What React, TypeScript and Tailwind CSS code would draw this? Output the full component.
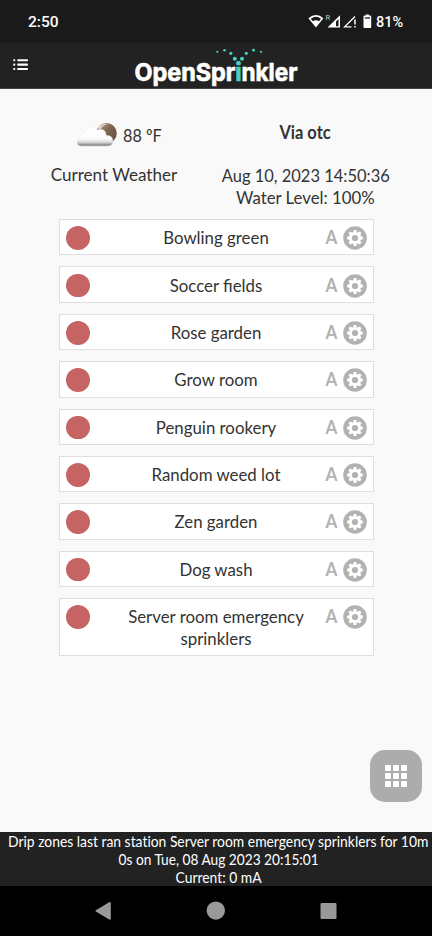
const stations = [
  { lines: ['Bowling green'] },
  { lines: ['Soccer fields'] },
  { lines: ['Rose garden'] },
  { lines: ['Grow room'] },
  { lines: ['Penguin rookery'] },
  { lines: ['Random weed lot'] },
  { lines: ['Zen garden'] },
  { lines: ['Dog wash'] },
  { lines: ['Server room emergency', 'sprinklers'] },
];

const drops = [
  [217.3, 51.8, 1.1],
  [224.5, 50.2, 1.3],
  [230.8, 53.3, 1.6],
  [234.8, 58.7, 2],
  [242, 58.7, 2],
  [246.3, 53.3, 1.6],
  [253.5, 50.2, 1.4],
  [261, 51.8, 1.1],
  [238.5, 63.4, 1.9],
];

function StatusIcons() {
  return (
    <svg width="64" height="16" viewBox="308 14 64 16" fill="white">
      <path d="M308.4 18.3 Q316 11.8 323.4 18.3 L315.9 27.6Z" />
      <path d="M310.8 18.8 Q316 14.9 321 18.8 L319 21.2 Q316 19.2 312.8 21.2Z" fill="#1a1a1a" />
      <text x="325.6" y="20.3" fontSize="7.5" className="font-['Roboto',sans-serif]" fill="#ccc">R</text>
      <path d="M327.5 27.6 L340 15.2 V27.6Z M336 21.5 V26.2 H338.5 V19Z" fillRule="evenodd" />
      <path d="M351.5 26.9 H344.6 L355 16.5" stroke="white" strokeWidth="1.3" fill="none" />
      <path d="M354.2 19.6h1.5v5h-1.5zM354.2 26h1.5v1.6h-1.5z" />
      <path d="M364.4 15.6h1.5v-1h3v1h1.5q.8 0 .8.8v10.6q0 .9-.8.9h-6q-.9 0-.9-.9V16.4q0-.8.9-.8z" />
      <path d="M364.8 17.3h5.2v1.3h-5.2z" fill="#1a1a1a" />
    </svg>
  );
}

function Logo() {
  return (
    <svg width="168" height="41" viewBox="133 47 168 41" className="font-['Inter',sans-serif]">
      <g fontSize="24.6" fontWeight="700" fill="white" stroke="white" strokeWidth="0.7">
        <text x="134.4" y="80.6" textLength="101" lengthAdjust="spacingAndGlyphs">OpenSpr</text>
        <text x="235.2" y="80.6" fill="#4bcfc0" stroke="#4bcfc0" textLength="6.4" lengthAdjust="spacingAndGlyphs">i</text>
        <text x="241.4" y="80.6" textLength="56" lengthAdjust="spacingAndGlyphs">nkler</text>
      </g>
      {drops.map(([x, y, r]) => (
        <circle key={x} cx={x} cy={y} r={r} fill="#4bcfc0" />
      ))}
    </svg>
  );
}

function WeatherIcon() {
  return (
    <svg width="42" height="26" viewBox="76 122 42 26">
      <defs>
        <linearGradient id="sun" x1="0" y1="0" x2="1" y2="1">
          <stop offset="0" stopColor="#c9ad99" />
          <stop offset="0.45" stopColor="#80664f" />
          <stop offset="1" stopColor="#5c4737" />
        </linearGradient>
        <linearGradient id="cloud" x1="0" y1="0" x2="0" y2="1">
          <stop offset="0" stopColor="#ffffff" />
          <stop offset="0.62" stopColor="#fbfbfb" />
          <stop offset="0.8" stopColor="#d4d4d4" />
          <stop offset="0.93" stopColor="#8a8a8a" />
          <stop offset="1" stopColor="#b8b8b8" />
        </linearGradient>
      </defs>
      <circle cx="106.5" cy="133.3" r="10.3" fill="url(#sun)" />
      <path d="M98 127.5 Q102 123.5 107.5 124 Q102 125.5 99.5 130Z" fill="#ead8cc" />
      <path
        d="M81.5 146.3 C76 146 75.8 140.5 79.8 137.5 C80.2 133.2 83.2 132.5 85.2 132 C86.5 126.5 93.5 125 97.5 130 C102.5 127.5 106.6 131.5 106.2 135.5 C111 134.8 113.8 138.6 112.6 141.5 C113 145.5 109.5 146.3 107 146.3Z"
        fill="url(#cloud)"
        stroke="#e4e4e4"
        strokeWidth="0.3"
      />
    </svg>
  );
}

function GearIcon() {
  return (
    <svg width="24" height="24" viewBox="-12 -12 24 24" className="shrink-0">
      <circle r="11.8" fill="#b2b2b2" />
      <g fill="white">
        <circle r="6" />
        {[0, 45, 90, 135].map((angle) => (
          <path key={angle} d="M-1.9 -5 L-1.3 -7.9 H1.3 L1.9 -5 V5 L1.3 7.9 H-1.3 L-1.9 5Z" transform={`rotate(${angle})`} />
        ))}
      </g>
      <circle r="3.1" fill="#b2b2b2" />
    </svg>
  );
}

function Station({ lines }: { lines: string[] }) {
  return (
    <div className="flex items-start border border-[#dfdfdf] bg-white px-[6px] py-[6.2px] leading-[22px]">
      <span className="-mb-1 size-[23.6px] shrink-0 rounded-full bg-[#c66363]" />
      <span className="ml-[26.4px] w-[200px] shrink-0 scale-x-[0.935] text-center whitespace-nowrap">
        {lines.map((line) => <span key={line} className="block">{line}</span>)}
      </span>
      <span className="-mb-1 ml-auto flex shrink-0 items-start gap-[5.5px]">
        <span className="scale-x-[0.92] text-[18.5px] leading-[23px] font-bold text-[#b2b2b2]">A</span>
        <GearIcon />
      </span>
    </div>
  );
}

export default function App() {
  return (
    <div className="flex h-[936px] w-[432px] flex-col overflow-hidden bg-[#f9f9f9] font-['Lato',sans-serif] text-[18px] text-[#333]">
      <div className="flex h-[43px] shrink-0 items-center bg-[#1a1a1a] pl-[28px] text-white">
        <span className="w-[280px] pt-[2px] font-['Roboto',sans-serif] text-[15.5px] font-medium">2:50</span>
        <StatusIcons />
        <span className="ml-[4px] pt-[2px] font-['Roboto',sans-serif] text-[14.5px] font-medium">81%</span>
      </div>
      <header className="flex h-[46px] shrink-0 items-start border-b border-[#444] bg-[#222]">
        <svg width="16" height="12" viewBox="0 0 16 12" fill="white" className="mt-[15.5px] ml-[12.5px]">
          {[0.2, 4.6, 9].map((y) => (
            <g key={y}>
              <rect x="0.2" y={y} width="2.1" height="2.1" rx="0.8" />
              <rect x="4.2" y={y} width="10.8" height="2.1" rx="0.8" />
            </g>
          ))}
        </svg>
        <div className="mt-[4px] ml-[104.5px]"><Logo /></div>
      </header>
      <main className="flex-1">
        <div className="flex h-[130px] leading-[22px]">
          <div className="w-[228px] pt-[33px]">
            <div className="flex items-center pl-[76px]">
              <WeatherIcon />
              <span className="ml-[5px] origin-left scale-x-[0.9]">88 ºF</span>
            </div>
            <div className="mt-[15px] scale-x-[0.948] text-center">Current Weather</div>
          </div>
          <div className="flex w-[155px] flex-col items-center pt-[32px] whitespace-nowrap">
            <div className="scale-x-[0.915] font-bold">Via otc</div>
            <div className="mt-[20.5px] scale-x-[0.915]">Aug 10, 2023 14:50:36</div>
            <div className="scale-x-[0.933]">Water Level: 100%</div>
          </div>
        </div>
        <div className="ml-[59px] flex w-[315px] flex-col gap-[11px]">
          {stations.map((station) => <Station key={station.lines[0]} lines={station.lines} />)}
        </div>
      </main>
      <button className="mr-[10px] mb-[30px] grid size-[52px] place-items-center self-end rounded-[15px] bg-[#acacac]">
        <span className="grid grid-cols-3 gap-[1.6px]">
          {Array.from({ length: 9 }, (_, i) => <span key={i} className="size-[6.4px] rounded-[1px] bg-white" />)}
        </span>
      </button>
      <footer className="flex h-[54px] shrink-0 flex-col items-center bg-[#222] pl-[5px] text-[15px] leading-[18px] whitespace-nowrap text-white [font-variant-ligatures:none]">
        <div className="scale-x-[0.925]">Drip zones last ran station Server room emergency sprinklers for 10m</div>
        <div className="scale-x-[0.913]">0s on Tue, 08 Aug 2023 20:15:01</div>
        <div className="scale-x-[0.925]">Current: 0 mA</div>
      </footer>
      <nav className="h-[50px] shrink-0 bg-black">
        <svg width="432" height="50" viewBox="0 886 432 50" fill="#999">
          <path d="M95.8 910.2 L109.2 902.2 Q110.8 901.5 110.8 903 V918.6 Q110.8 920.3 109.2 919.4 L95.8 911.6 Q94.8 910.9 95.8 910.2Z" />
          <circle cx="215.8" cy="910.6" r="9.2" />
          <rect x="320.5" y="903" width="16" height="16" rx="1.3" />
        </svg>
      </nav>
    </div>
  );
}
